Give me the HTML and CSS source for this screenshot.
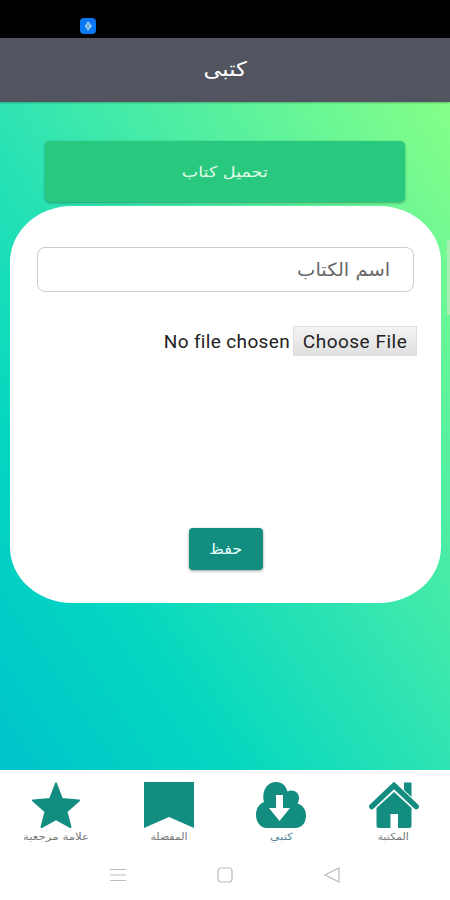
FILE: index.html
```html
<!DOCTYPE html>
<html lang="ar" dir="rtl">
<head>
<meta charset="utf-8">
<title>كتبي</title>
<link rel="stylesheet" href="styles.css">
</head>
<body>
<div class="status" dir="ltr">
  <svg class="status-icon" viewBox="0 0 16 16"><rect width="16" height="16" rx="4" fill="#0b78f3"/><path d="M8 3.200 12 8 8 12.800 4.800 8z" fill="#a9d4f5"/><path d="M8 5v6M6.500 6.500l3 3M9.500 6.500l-3 3" stroke="#4a91cf" stroke-width=".8"/></svg>
</div>
<header class="header"><h1 class="title">كتبى</h1></header>
<main class="content">
  <button class="upload"><span class="upload-text">تحميل كتاب</span></button>
  <section class="card">
    <div class="field"><span class="field-text">اسم الكتاب</span></div>
    <div class="file"><span class="file-button">Choose File</span><span class="file-name">No file chosen</span></div>
    <button class="save"><span class="save-text">حفظ</span></button>
  </section>
  <div class="scrollbar"></div>
</main>
<nav class="tabs">
  <a class="tab"><svg class="tab-icon" viewBox="0 0 50 46"><path d="M35 .5h7.500V15L35 8z"/><path d="M2.800 24.500 25 3.500l22.200 21" fill="none" stroke="#128d80" stroke-width="5.500" stroke-linecap="round"/><path d="M25 10 42.500 26v17.500q0 2.500-2.500 2.500H29V32h-7.500v14H10q-2.500 0-2.500-2.500V26z"/></svg><span class="tab-label library">المكتبة</span></a>
  <a class="tab"><svg class="tab-icon" viewBox="0 0 50 46"><path d="M11 46C4 46 0 39.500 0 33c0-7 3.500-11.500 8-13C5.500 9 11 0 20 0c6.500 0 10 4 11.500 9.500C37 7 43 10 43 16c0 2.300-.5 4-1.500 5.500C47 23 50 28 50 33.500 50 41 46 46 39 46z"/><path d="M20 13h7v13h7L23.500 39 13 26h7z" fill="#fff"/></svg><span class="tab-label mine">كتبي</span></a>
  <a class="tab"><svg class="tab-icon" viewBox="0 0 50 46"><path d="M0 0h50v46L25 35 0 46z"/></svg><span class="tab-label favorite">المفضلة</span></a>
  <a class="tab"><svg class="tab-icon" viewBox="0 0 50 46"><path d="M25 1.500 31 17 48 18.500 35.500 29.500 39.500 45 25 37 10.500 45 14.500 29.500 2 18.500 19 17z" stroke="#128d80" stroke-width="2" stroke-linejoin="round"/></svg><span class="tab-label bookmark">علامة مرجعية</span></a>
</nav>
<footer class="system" dir="ltr">
  <svg class="system-icon" viewBox="0 0 18 18"><path d="M1 3.500h16M1 9h16M1 14.500h16"/></svg>
  <svg class="system-icon" viewBox="0 0 18 18"><rect x="2" y="2" width="14" height="14" rx="3"/></svg>
  <svg class="system-icon" viewBox="0 0 18 18"><path d="M16 2v14L2 9z"/></svg>
</footer>
</body>
</html>
```
FILE: styles.css
```css
* { box-sizing: border-box; }
body { margin: 0; height: 900px; display: flex; flex-direction: column; overflow: hidden; background: #fff; font-family: "DejaVu Sans", sans-serif; }
button { border: 0; font-family: inherit; padding: 0; }
.status { height: 38px; background: #000; padding: 18px 0 0 80px; }
.status-icon { display: block; width: 16px; height: 16px; }
.header { height: 64px; background: #52555f; display: flex; align-items: center; justify-content: center; box-shadow: 0 1px 2px #0004; z-index: 1; }
.title { margin: 0 0 2px; font-size: 20px; font-weight: 400; color: #fff; transform: scaleX(1.13); }
.content { position: relative; height: 668px; padding: 39px 9px 0 10px; display: flex; flex-direction: column; background: linear-gradient(to top right, #00c3cb 0%, #03d7c1 25%, #32e5b1 52%, #86ff88 100%); }
.upload { width: 360px; height: 61px; margin: 0 36px 0 0; flex: none; border-radius: 5px; background: #28c87e; color: #e0fbe8; font-size: 15px; box-shadow: 0 1px 3px #0005; }
.upload-text { display: inline-block; transform: scaleX(1.17); }
.card { height: 397px; margin-top: 4px; padding: 41px 27px 0; border-radius: 62px / 56px; background: #fff; display: flex; flex-direction: column; }
.field { height: 45px; border: 1px solid #ccc; border-radius: 8px; display: flex; align-items: center; padding: 0 23px; color: #666; font-size: 18px; }
.field-text { transform: scaleX(1.08); transform-origin: right; }
.file { margin: 34px -3px 0 0; height: 30px; display: flex; align-items: center; gap: 3px; color: #222; font: 19px Roboto, sans-serif; white-space: nowrap; }
.file-button { width: 124px; height: 30px; border: 1px solid #ddd; background: linear-gradient(#f3f3f3, #e0e0e0); display: flex; align-items: center; justify-content: center; letter-spacing: .5px; }
.file-name { letter-spacing: .35px; }
.save { width: 74px; height: 42px; margin: 172px auto 0; border-radius: 4px; background: #128d80; color: #e9fffb; font-size: 15px; box-shadow: 0 1px 3px #0006; }
.save-text { display: inline-block; transform: scaleX(1.07); }
.scrollbar { position: absolute; right: 0; top: 138px; width: 3px; height: 75px; background: #a9efb5; border-radius: 2px 0 0 2px; }
.tabs { height: 80px; padding-top: 12px; display: grid; grid-template-columns: repeat(4, 1fr); background: #fff; }
.tab { display: flex; flex-direction: column; align-items: center; }
.tab-icon { width: 50px; height: 46px; fill: #128d80; }
.tab-label { height: 18px; line-height: 18px; font-size: 10px; color: #777; white-space: nowrap; transform: scaleX(1.09); }
.bookmark { transform: scaleX(1.18); }
.mine { color: #4f8196; transform: scaleX(1.2); }
.system { height: 50px; padding: 16px 109px 0; display: flex; justify-content: space-between; }
.system-icon { width: 18px; height: 18px; fill: none; stroke: #bbb; stroke-width: 1.2; }
```
